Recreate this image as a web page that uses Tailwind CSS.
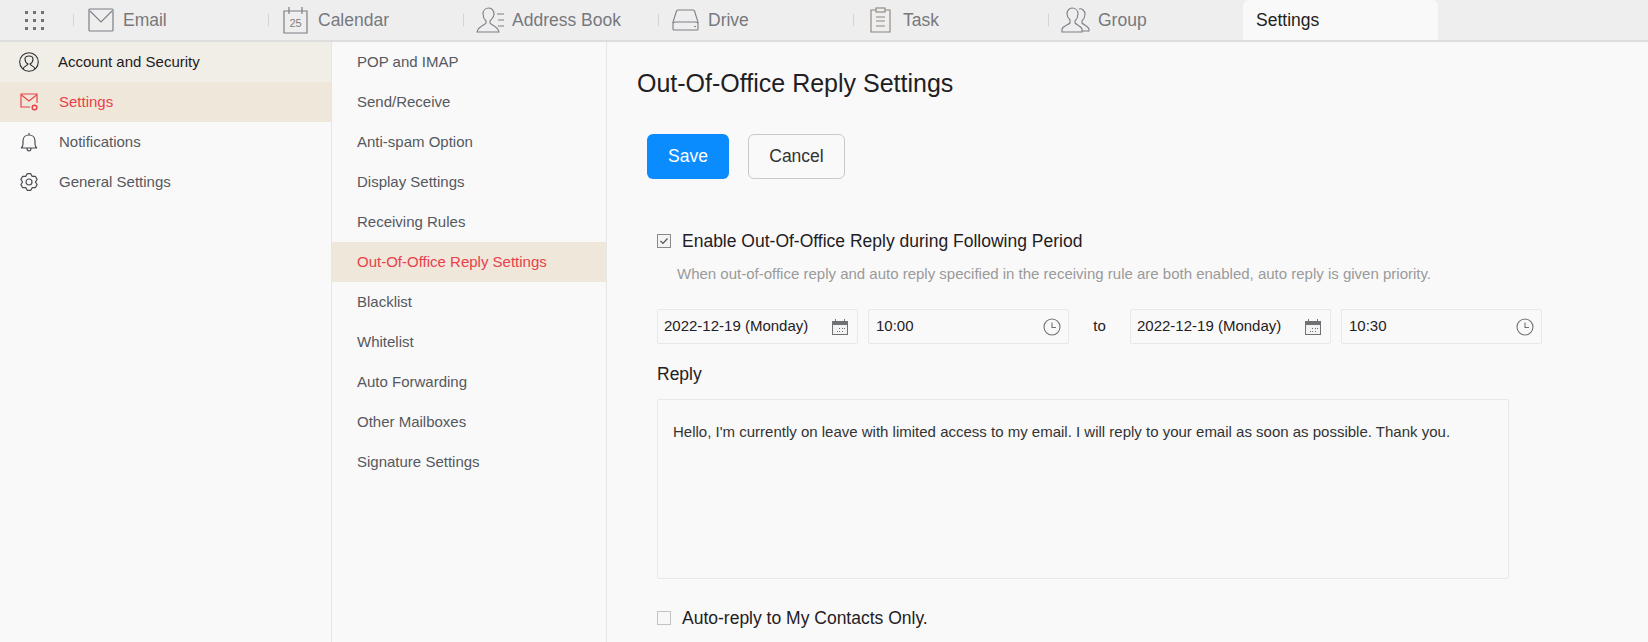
<!doctype html>
<html><head><meta charset="utf-8"><script src="https://cdn.jsdelivr.net/npm/@tailwindcss/browser@4"></script></head>
<body class="m-0 h-[642px] w-[1648px] overflow-hidden bg-[#f9f9f9] font-['Liberation_Sans',Arial,sans-serif]">
<header class="flex h-[42px] border-b-2 border-[#dedede] bg-[#eeeeee] text-[17.5px] text-[#77797d]">
  <div class="flex w-[73px] shrink-0 items-center pl-[24px]">
    <svg width="21" height="21" viewBox="0 0 21 21" fill="#6f7175"><rect x="1" y="1" width="3" height="3"/><rect x="9" y="1" width="3" height="3"/><rect x="17" y="1" width="3" height="3"/><rect x="1" y="9" width="3" height="3"/><rect x="9" y="9" width="3" height="3"/><rect x="17" y="9" width="3" height="3"/><rect x="1" y="17" width="3" height="3"/><rect x="9" y="17" width="3" height="3"/><rect x="17" y="17" width="3" height="3"/></svg>
  </div>
  <div class="flex w-[195px] items-center"><i class="h-[12px] w-px bg-[#d3d3d3]"></i><svg class="ml-[14px]" width="26" height="24" viewBox="0 0 26 24" fill="none" stroke="#7c7f85" stroke-width="1.2"><rect x="1" y="1" width="24" height="22" rx="1"/><path d="M2 3l11 11L24 3"/></svg><span class="ml-[9px]">Email</span></div>
  <div class="flex w-[195px] items-center"><i class="h-[12px] w-px bg-[#d3d3d3]"></i><svg class="ml-[14px]" width="25" height="28" viewBox="0 0 25 28"><path fill="none" stroke="#7c7f85" stroke-width="1.2" d="M1 5h23v22H1zM6 1v7M19 1v7"/><text x="12.5" y="21" text-anchor="middle" font-size="11" fill="#7c7f85" font-family="Liberation Sans">25</text></svg><span class="ml-[10px]">Calendar</span></div>
  <div class="flex w-[195px] items-center"><i class="h-[12px] w-px bg-[#d3d3d3]"></i><svg class="ml-[12px]" width="29" height="26" viewBox="0 0 29 26" fill="none" stroke="#7c7f85" stroke-width="1.1"><path d="M13 1c-4 0-6 3-6 6 0 3 1 5 3 7v2c-1 2-8 3-9 9h22c-1-6-8-7-9-9v-2c2-2 4-4 4-7 0-3-2-6-5-6z"/><path d="M21 7h7M22 13h6M22 19h6"/></svg><span class="ml-[7px]">Address Book</span></div>
  <div class="flex w-[195px] items-center"><i class="h-[12px] w-px bg-[#d3d3d3]"></i><svg class="ml-[13px]" width="27" height="24" viewBox="0 0 27 24" fill="none" stroke="#7c7f85" stroke-width="1.1"><path d="M6 2h15q1 0 1.500 1L26 14v7q0 1-1 1H2q-1 0-1-1v-7L4.500 3Q5 2 6 2z"/><path d="M1 15q1-1 3-1h19q2 0 3 1"/><path d="M22 18.500h2"/></svg><span class="ml-[9px]">Drive</span></div>
  <div class="flex w-[195px] items-center"><i class="h-[12px] w-px bg-[#d3d3d3]"></i><svg class="ml-[16px]" width="21" height="26" viewBox="0 0 21 26" fill="none" stroke="#8b8478" stroke-width="1.1"><path d="M6 3H1v22h19V3h-5"/><rect x="6" y="1" width="9" height="4"/><path d="M6 10h9M6 14h9M6 19h9"/></svg><span class="ml-[12px]">Task</span></div>
  <div class="flex w-[195px] items-center"><i class="h-[12px] w-px bg-[#d3d3d3]"></i><svg class="ml-[12px]" width="29" height="26" viewBox="0 0 29 26" fill="none" stroke="#7c7f85" stroke-width="1.1"><path d="M1 25v-3c1-3 6-4 8-6v-3c-2-2-3-4-3-6 0-3 2-6 5-6 4 0 6 3 6 6 0 3-1 5-3 7v2c2 2 6 3 7 6v3z"/><path d="M18 2c3-1 6 2 6 5 0 3-1 5-3 7v2c2 2 6 3 7 6v2h-7"/></svg><span class="ml-[8px]">Group</span></div>
  <div class="flex h-[40px] w-[195px] items-center rounded-t-[6px] bg-[#f9f9f9] pl-[13px] text-[#222]">Settings</div>
</header>
<div class="flex h-[600px]">
  <nav class="w-[332px] shrink-0 border-r border-[#e6e6e6] text-[15px] text-[#55585e]">
    <div class="flex h-[40px] items-center bg-[#f1eee7] pl-[19px] text-[#1f2023]"><svg width="20" height="20" viewBox="0 0 20 20" fill="none" stroke="#2c2d30" stroke-width="1.1"><circle cx="10" cy="10" r="9.300"/><path d="M4 17c1-3 4-3 5-5-2-1-3-3-3-5 0-2 2-3 4-3s4 1 4 3c0 2-1 4-3 5 1 2 4 2 5 5"/></svg><span class="ml-[19px]">Account and Security</span></div>
    <div class="flex h-[40px] items-center bg-[#efe7d9] pl-[20px] text-[#e8414b]"><svg width="18" height="18" viewBox="0 0 18 18" fill="none" stroke="#e8414b" stroke-width="1.2"><path d="M10 14H1V1h16v9"/><path d="M1.500 2L9 8l7.500-6"/><circle cx="14.500" cy="14.500" r="2.300" stroke-width="1.500"/></svg><span class="ml-[21px]">Settings</span></div>
    <div class="flex h-[40px] items-center pl-[20px]"><svg width="18" height="19" viewBox="0 0 18 19" fill="none" stroke="#4b4d52" stroke-width="1.2"><path d="M1 15q2-1 2-4V8c0-4 3-6 6-6s6 2 6 6v3q0 3 2 4zM9 0v2M7 15c0 4 4 4 4 0"/></svg><span class="ml-[21px]">Notifications</span></div>
    <div class="flex h-[40px] items-center pl-[20px]"><svg width="18" height="18" viewBox="0 0 18 18" fill="none" stroke="#4b4d52" stroke-width="1.2" stroke-linejoin="round"><path d="M10.770.69H7.230L5.750 3.370 2.680 3.310.92 6.370 2.500 9 .92 11.630l1.760 3.060 3.070-.06 1.480 2.680h3.540l1.480-2.680 3.070.06 1.760-3.060L15.500 9l1.580-2.630-1.760-3.060-3.070.06z"/><circle cx="9" cy="9" r="3"/></svg><span class="ml-[21px]">General Settings</span></div>
  </nav>
  <nav class="w-[275px] shrink-0 border-r border-[#e6e6e6] text-[15px] text-[#55585e]">
    <div class="flex h-[40px] items-center pl-[25px]">POP and IMAP</div>
    <div class="flex h-[40px] items-center pl-[25px]">Send/Receive</div>
    <div class="flex h-[40px] items-center pl-[25px]">Anti-spam Option</div>
    <div class="flex h-[40px] items-center pl-[25px]">Display Settings</div>
    <div class="flex h-[40px] items-center pl-[25px]">Receiving Rules</div>
    <div class="flex h-[40px] items-center bg-[#efe7d9] pl-[25px] text-[#e8414b]">Out-Of-Office Reply Settings</div>
    <div class="flex h-[40px] items-center pl-[25px]">Blacklist</div>
    <div class="flex h-[40px] items-center pl-[25px]">Whitelist</div>
    <div class="flex h-[40px] items-center pl-[25px]">Auto Forwarding</div>
    <div class="flex h-[40px] items-center pl-[25px]">Other Mailboxes</div>
    <div class="flex h-[40px] items-center pl-[25px]">Signature Settings</div>
  </nav>
  <main class="min-w-0 flex-1 pl-[30px] text-[#1f2023]">
    <h1 class="mt-[27px] text-[25px] leading-[28px]">Out-Of-Office Reply Settings</h1>
    <div class="mt-[37px] ml-[10px] flex gap-[19px] text-[17.5px]">
      <button class="h-[45px] w-[82px] rounded-[6px] bg-[#0a8cff] text-white">Save</button>
      <button class="h-[45px] w-[97px] rounded-[6px] border border-[#c9c9c9] text-[#333]">Cancel</button>
    </div>
    <div class="mt-[52px] ml-[20px] flex h-[20px] items-center text-[17.5px]">
      <span class="flex h-[14px] w-[14px] items-center justify-center border border-[#8a8a8a] bg-[#f4f4f4]"><svg width="10" height="10" viewBox="0 0 10 10" fill="none" stroke="#555" stroke-width="1.2"><path d="M1.500 5l2.500 2.500 4.500-5"/></svg></span>
      <span class="ml-[11px]">Enable Out-Of-Office Reply during Following Period</span>
    </div>
    <p class="mt-[13px] ml-[40px] text-[15px] leading-[20px] text-[#9a9a9a]">When out-of-office reply and auto reply specified in the receiving rule are both enabled, auto reply is given priority.</p>
    <div class="mt-[25px] ml-[20px] flex h-[35px] items-stretch text-[15px]">
      <div class="flex w-[201px] items-center justify-between rounded-[2px] border border-[#e8e8e8] pl-[6px] pr-[8px]">2022-12-19 (Monday)
        <svg width="18" height="16" viewBox="0 0 18 16"><path fill="#6f7175" d="M1 2h3V0h1v2h8V0h1v2h3v14H1z"/><path fill="#f3f3f3" d="M2 6h14v9H2z"/><path fill="#6f7175" d="M8 9h1v1H8zM11 9h1v1h-1zM13 9h1v1h-1zM6 12h1v1H6zM8 12h1v1H8zM11 12h1v1h-1z"/></svg></div>
      <div class="ml-[10px] flex w-[201px] items-center justify-between rounded-[2px] border border-[#e8e8e8] pl-[7px] pr-[7px]">10:00
        <svg width="18" height="18" viewBox="0 0 18 18" fill="none" stroke="#6f7175" stroke-width="1.1"><circle cx="9" cy="9" r="8"/><path d="M9 4.500V9.500h4"/></svg></div>
      <div class="flex w-[61px] items-center justify-center">to</div>
      <div class="flex w-[201px] items-center justify-between rounded-[2px] border border-[#e8e8e8] pl-[6px] pr-[8px]">2022-12-19 (Monday)
        <svg width="18" height="16" viewBox="0 0 18 16"><path fill="#6f7175" d="M1 2h3V0h1v2h8V0h1v2h3v14H1z"/><path fill="#f3f3f3" d="M2 6h14v9H2z"/><path fill="#6f7175" d="M8 9h1v1H8zM11 9h1v1h-1zM13 9h1v1h-1zM6 12h1v1H6zM8 12h1v1H8zM11 12h1v1h-1z"/></svg></div>
      <div class="ml-[10px] flex w-[201px] items-center justify-between rounded-[2px] border border-[#e8e8e8] pl-[7px] pr-[7px]">10:30
        <svg width="18" height="18" viewBox="0 0 18 18" fill="none" stroke="#6f7175" stroke-width="1.1"><circle cx="9" cy="9" r="8"/><path d="M9 4.500V9.500h4"/></svg></div>
    </div>
    <div class="mt-[20px] ml-[20px] text-[17.5px] leading-[20px]">Reply</div>
    <div class="mt-[15px] ml-[20px] h-[180px] w-[852px] rounded-[2px] border border-[#e8e8e8] pl-[15px] pt-[22px] text-[15px] leading-[20px] text-[#333]">Hello, I'm currently on leave with limited access to my email. I will reply to your email as soon as possible. Thank you.</div>
    <div class="mt-[29px] ml-[20px] flex h-[20px] items-center text-[17.5px]">
      <span class="h-[14px] w-[14px] border border-[#c4c4c4] bg-[#f7f7f7]"></span>
      <span class="ml-[11px]">Auto-reply to My Contacts Only.</span>
    </div>
  </main>
</div>
</body></html>
